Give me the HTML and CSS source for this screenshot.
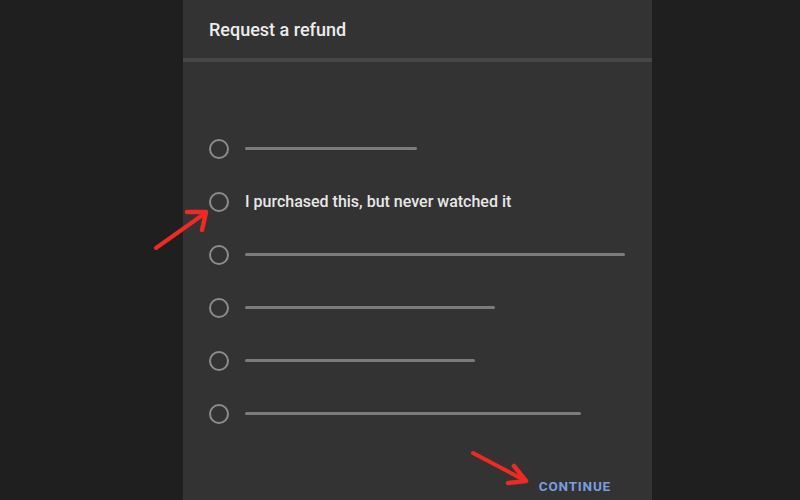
FILE: index.html
```html
<!DOCTYPE html>
<html lang="en">
<head>
  <meta charset="UTF-8" />
  <title>Request a refund</title>
  <link rel="stylesheet" href="styles.css">
</head>
<body>
  <div class="dialog">
    <div class="header">Request a refund</div>
    <div class="divider"></div>

    <div class="options">
      <div class="option"><span class="radio"></span><span class="bar" style="width:172px"></span></div>
      <div class="option"><span class="radio"></span><span class="label">I purchased this, but never watched it</span></div>
      <div class="option"><span class="radio"></span><span class="bar" style="width:380px"></span></div>
      <div class="option"><span class="radio"></span><span class="bar" style="width:250px"></span></div>
      <div class="option"><span class="radio"></span><span class="bar" style="width:230px"></span></div>
      <div class="option"><span class="radio"></span><span class="bar" style="width:336px"></span></div>
    </div>

    <div class="actions">
      <span class="continue">CONTINUE</span>
    </div>
  </div>

  <!-- annotation arrows -->
  <svg class="arrow arrow-left" width="70" height="50" viewBox="0 0 70 50">
    <line x1="6" y1="44" x2="54" y2="10" stroke="#ee2a24" stroke-width="4" stroke-linecap="round"/>
    <polyline points="37,8 56,8 52,26" fill="none" stroke="#ee2a24" stroke-width="4.5" stroke-linecap="round" stroke-linejoin="round"/>
  </svg>
  <svg class="arrow arrow-right" width="70" height="40" viewBox="0 0 70 40">
    <line x1="5" y1="5" x2="56" y2="32" stroke="#ee2a24" stroke-width="4" stroke-linecap="round"/>
    <polyline points="46,18 58,33 40,35" fill="none" stroke="#ee2a24" stroke-width="4.5" stroke-linecap="round" stroke-linejoin="round"/>
  </svg>
</body>
</html>
```

FILE: styles.css
```css
body {
  margin: 0;
  height: 500px;
  overflow: hidden;
  background: #1f1f1f;
  font-family: Roboto, 'Liberation Sans', sans-serif;
  position: relative;
}
.dialog {
  width: 469px;
  height: 500px;
  margin-left: 183px;
  background: #333333;
  display: flex;
  flex-direction: column;
}
.header {
  height: 58px;
  padding-left: 26px;
  display: flex;
  align-items: center;
  color: #ececec;
  font-size: 18px;
  font-weight: 500;
}
.divider {
  height: 4px;
  background: #474747;
}
.options {
  padding-top: 60px;
  display: flex;
  flex-direction: column;
}
.option {
  height: 53px;
  padding-left: 26px;
  display: flex;
  align-items: center;
  gap: 16px;
}
.radio {
  width: 16px;
  height: 16px;
  border: 2px solid #8c8c8c;
  border-radius: 50%;
  flex: none;
}
.bar {
  height: 3px;
  background: #7c7c7c;
  border-radius: 2px;
}
.label {
  color: #e8e8e8;
  font-size: 16px;
  font-weight: 500;
}
.actions {
  margin-top: auto;
  display: flex;
  justify-content: flex-end;
  padding: 0 41px 6px 0;
}
.continue {
  color: #7b9de0;
  font-size: 13.5px;
  font-weight: 700;
  letter-spacing: 0.8px;
}
.arrow {
  position: absolute;
}
.arrow-left {
  left: 150px;
  top: 204px;
}
.arrow-right {
  left: 468px;
  top: 448px;
}
```
